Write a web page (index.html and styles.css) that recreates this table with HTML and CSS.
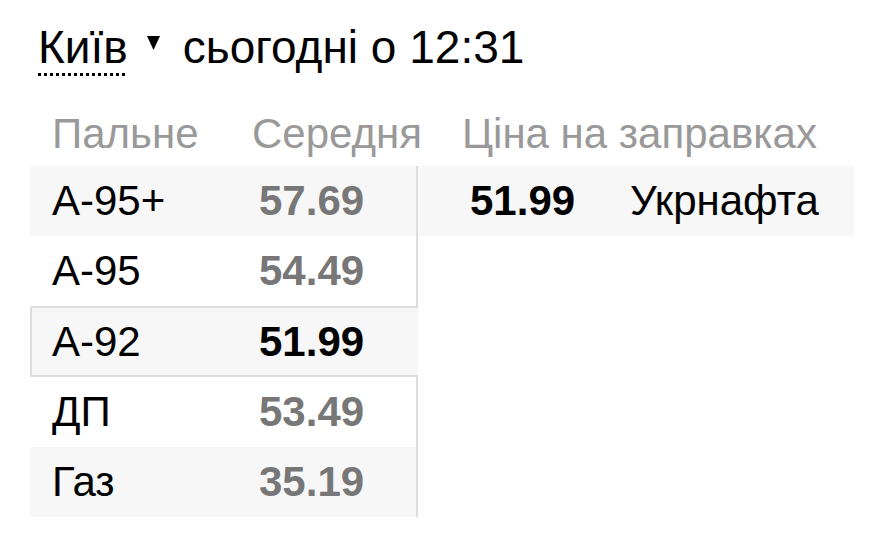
FILE: index.html
```html
<!DOCTYPE html>
<html lang="uk">
<head>
<meta charset="utf-8">
<link rel="stylesheet" href="styles.css">
</head>
<body>
<div class="widget">
  <div class="title"><span class="city">Київ</span><svg class="arrow" width="13" height="14" viewBox="0 0 13 14"><polygon points="0,0 13,0 6.5,14" fill="#000"/></svg><span class="when">сьогодні о 12:31</span></div>
  <div class="tables">
    <div class="left">
      <div class="head"><span class="c-fuel">Пальне</span><span class="c-avg">Середня</span></div>
      <div class="rows">
        <div class="row odd"><span class="c-fuel">А-95+</span><span class="c-avg num">57.69</span></div>
        <div class="row"><span class="c-fuel">А-95</span><span class="c-avg num">54.49</span></div>
        <div class="row odd selected"><span class="c-fuel">А-92</span><span class="c-avg num">51.99</span></div>
        <div class="row"><span class="c-fuel">ДП</span><span class="c-avg num">53.49</span></div>
        <div class="row odd"><span class="c-fuel">Газ</span><span class="c-avg num">35.19</span></div>
      </div>
    </div>
    <div class="right">
      <div class="head"><span class="c-price-head">Ціна на заправках</span></div>
      <div class="rows">
        <div class="row odd"><span class="c-price">51.99</span><span class="c-station">Укрнафта</span></div>
      </div>
    </div>
  </div>
</div>
</body>
</html>
```

FILE: styles.css
```css
html, body {
  margin: 0;
  padding: 0;
  background: #fff;
}
body {
  font-family: "Liberation Sans", Arial, sans-serif;
  color: #000;
}
.widget {
  padding: 23px 0 0 30px;
}
.title {
  font-size: 46px;
  line-height: 48px;
  height: 48px;
  padding-left: 8px;
  white-space: nowrap;
}
.city {
  padding-bottom: 3px;
  background-image: linear-gradient(to right, #000 50%, transparent 50%);
  background-size: 6px 3px;
  background-repeat: repeat-x;
  background-position: 0 100%;
}
.arrow {
  display: inline-block;
  vertical-align: baseline;
  margin: 0 23px 0 19px;
  position: relative;
  top: -13px;
}
.tables {
  display: flex;
  margin-top: 45px;
}
.head {
  font-size: 42px;
  line-height: 36px;
  color: #999;
  display: flex;
  height: 50px;
  white-space: nowrap;
}
.left {
  width: 388px;
}
.left .rows {
  border-right: 2px solid #ddd;
}
.row {
  height: 70px;
  line-height: 70px;
  font-size: 42px;
  display: flex;
  box-sizing: border-box;
  white-space: nowrap;
}
.row.odd {
  background: #f7f7f7;
}
.c-fuel {
  padding-left: 22px;
  width: 200px;
  box-sizing: border-box;
  flex: none;
}
.c-avg {
  padding-left: 22px;
}
.num {
  font-weight: bold;
  color: #777;
  padding-left: 29px;
}
.row.selected {
  height: 71px;
  border: 2px solid #ddd;
  border-right: none;
  margin-right: -2px;
  line-height: 67px;
}
.row.selected .c-fuel {
  padding-left: 20px;
  width: 198px;
}
.row.selected .num {
  color: #000;
}
.right {
  width: 436px;
}
.right .head {
  padding-left: 44px;
}
.c-price {
  font-weight: bold;
  padding-left: 52px;
  width: 212px;
  box-sizing: border-box;
  flex: none;
}
```
